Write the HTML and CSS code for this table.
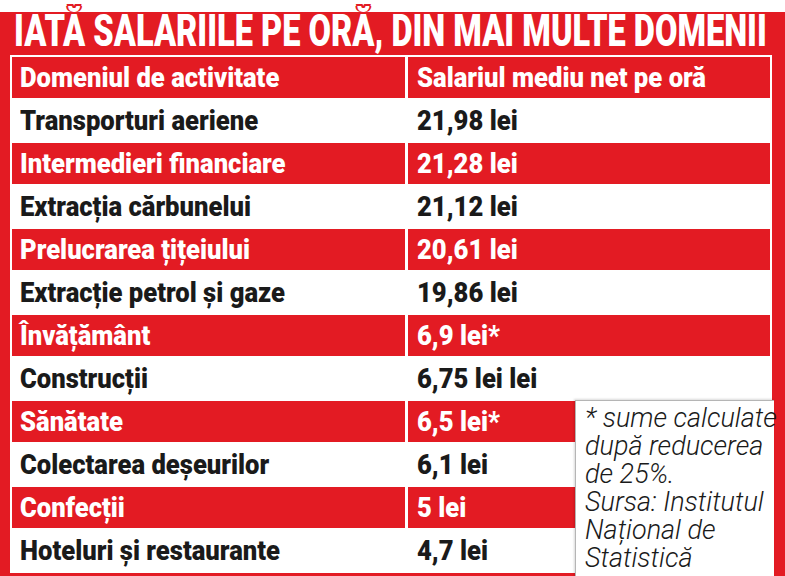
FILE: index.html
```html
<!DOCTYPE html>
<html lang="ro">
<head>
<meta charset="utf-8">
<link rel="stylesheet" href="styles.css">
</head>
<body>
<div class="frame">
  <h1 class="title"><span class="title-text">IATĂ SALARIILE PE ORĂ, DIN MAI MULTE DOMENII</span></h1>
  <div class="table">
    <div class="cell red"><span class="t">Domeniul de activitate</span></div>
    <div class="cell red c2"><span class="t">Salariul mediu net pe oră</span></div>

    <div class="cell"><span class="t">Transporturi aeriene</span></div>
    <div class="cell c2"><span class="t">21,98 lei</span></div>

    <div class="cell red"><span class="t">Intermedieri financiare</span></div>
    <div class="cell red c2"><span class="t">21,28 lei</span></div>

    <div class="cell"><span class="t">Extracția cărbunelui</span></div>
    <div class="cell c2"><span class="t">21,12 lei</span></div>

    <div class="cell red"><span class="t">Prelucrarea țițeiului</span></div>
    <div class="cell red c2"><span class="t">20,61 lei</span></div>

    <div class="cell"><span class="t">Extracție petrol și gaze</span></div>
    <div class="cell c2"><span class="t">19,86 lei</span></div>

    <div class="cell red"><span class="t">Învățământ</span></div>
    <div class="cell red c2"><span class="t">6,9 lei*</span></div>

    <div class="cell"><span class="t">Construcții</span></div>
    <div class="cell c2"><span class="t">6,75 lei lei</span></div>

    <div class="cell red"><span class="t">Sănătate</span></div>
    <div class="cell red c2"><span class="t">6,5 lei*</span></div>

    <div class="cell"><span class="t">Colectarea deșeurilor</span></div>
    <div class="cell c2"><span class="t">6,1 lei</span></div>

    <div class="cell red"><span class="t">Confecții</span></div>
    <div class="cell red c2"><span class="t">5 lei</span></div>

    <div class="cell"><span class="t">Hoteluri și restaurante</span></div>
    <div class="cell c2"><span class="t">4,7 lei</span></div>
  </div>
  <div class="note">
    <p>* sume calculate<br>după reducerea<br>de 25%.<br>Sursa: Institutul<br>Național de<br>Statistică</p>
  </div>
</div>
</body>
</html>
```

FILE: styles.css
```css
html, body {
  margin: 0;
  padding: 0;
  background: #ffffff;
}

body {
  width: 785px;
  height: 576px;
  overflow: hidden;
}

.frame {
  position: relative;
  margin-top: 12px;
  width: 785px;
  height: 564px;
  background: #e31b23;
}

.title {
  margin: 0;
  height: 41px;
  padding: 2px 0 0 14px;
  font-family: "Roboto", "Liberation Sans", sans-serif;
  font-weight: 900;
  font-size: 32.6px;
  line-height: 43px;
  color: #ffffff;
  white-space: nowrap;
}

.title-text {
  display: inline-block;
  line-height: 32.6px;
  transform-origin: 0 27.4px;
  transform: scaleY(1.379);
  text-shadow:
    0 -1.5px 0 #e31b23,
    1.5px -1.5px 0 #e31b23,
    -1.5px -1.5px 0 #e31b23,
    2px 0 0 #e31b23,
    -2px 0 0 #e31b23;
}

.table {
  margin-left: 10px;
  width: 758px;
  padding: 2px;
  background: #ffffff;
  display: grid;
  grid-template-columns: 393px 362px;
  grid-auto-rows: 41px;
  column-gap: 3px;
  row-gap: 2px;
}

.cell {
  display: flex;
  align-items: center;
  padding-left: 8px;
  font-family: "Roboto", "Liberation Sans", sans-serif;
  font-weight: 900;
  font-size: 28px;
  color: #1a1a1a;
  white-space: nowrap;
  background: #ffffff;
}

.cell.c2 {
  padding-left: 9px;
}

.cell.red {
  background: #e31b23;
  color: #ffffff;
}

.t {
  display: inline-block;
  transform-origin: left center;
  transform: scaleX(0.915);
}

.note {
  position: absolute;
  left: 575px;
  top: 388px;
  width: 198px;
  height: 190px;
  background: #ffffff;
  border-left: 1px solid #b5b5b5;
  border-top: 1px solid #b5b5b5;
  box-shadow: -1px -1px 2px rgba(0, 0, 0, 0.15);
}

.note p {
  margin: 0;
  padding: 3px 0 0 9px;
  font-family: "Roboto", "Liberation Sans", sans-serif;
  font-style: italic;
  font-weight: 300;
  font-size: 27px;
  line-height: 28px;
  color: #1a1a1a;
  white-space: nowrap;
}
```
